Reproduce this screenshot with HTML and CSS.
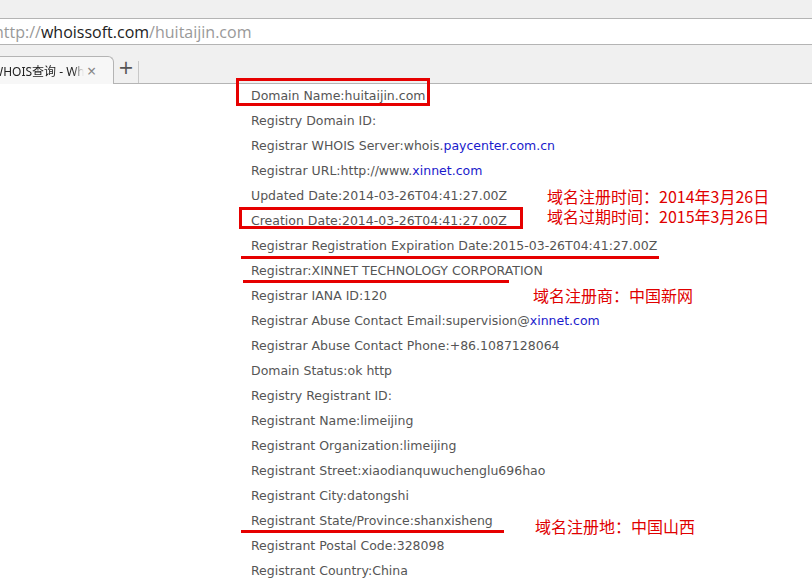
FILE: index.html
```html
<!DOCTYPE html>
<html lang="zh-CN">
<head>
<meta charset="utf-8">
<title>WHOIS查询 - Whoissoft</title>
<link rel="stylesheet" href="styles.css">
</head>
<body>
<div class="chrome">
  <div class="titlebar"></div>
  <div class="addressbar">
    <span class="url"><span class="dim">http://</span><span class="host">whoissoft.com</span><span class="dim">/huitaijin.com</span></span>
  </div>
  <div class="tabstrip">
    <div class="tab">
      <span class="tab-title">WHOIS查询 - Whoissoft</span>
      <span class="tab-close">×</span>
    </div>
    <div class="newtab">+</div>
    <div class="tab-sep"></div>
  </div>
</div>
<main class="page">
  <ul class="whois">
    <li>Domain Name:huitaijin.com</li>
    <li>Registry Domain ID:</li>
    <li>Registrar WHOIS Server:whois.<a class="lnk">paycenter.com.cn</a></li>
    <li>Registrar URL:http://www.<a class="lnk">xinnet.com</a></li>
    <li>Updated Date:2014-03-26T04:41:27.00Z</li>
    <li>Creation Date:2014-03-26T04:41:27.00Z</li>
    <li>Registrar Registration Expiration Date:2015-03-26T04:41:27.00Z</li>
    <li>Registrar:XINNET TECHNOLOGY CORPORATION</li>
    <li>Registrar IANA ID:120</li>
    <li>Registrar Abuse Contact Email:supervision@<a class="lnk">xinnet.com</a></li>
    <li>Registrar Abuse Contact Phone:+86.1087128064</li>
    <li>Domain Status:ok http</li>
    <li>Registry Registrant ID:</li>
    <li>Registrant Name:limeijing</li>
    <li>Registrant Organization:limeijing</li>
    <li>Registrant Street:xiaodianquwuchenglu696hao</li>
    <li>Registrant City:datongshi</li>
    <li>Registrant State/Province:shanxisheng</li>
    <li>Registrant Postal Code:328098</li>
    <li>Registrant Country:China</li>
  </ul>
  <div class="mark box box-name"></div>
  <div class="mark box box-created"></div>
  <div class="mark rule rule-expire"></div>
  <div class="mark rule rule-registrar"></div>
  <div class="mark rule rule-state"></div>
  <div class="note note-dates">域名注册时间：2014年3月26日<br>域名过期时间：2015年3月26日</div>
  <div class="note note-registrar">域名注册商：中国新网</div>
  <div class="note note-state">域名注册地：中国山西</div>
</main>
</body>
</html>
```
FILE: styles.css
```css
* { box-sizing: border-box; }
html, body { margin: 0; padding: 0; background: #fff; overflow: hidden; }
body { width: 812px; height: 581px; }

.chrome { font-family: "Open Sans", "Noto Sans CJK SC", sans-serif; }
.titlebar { height: 19px; background: #f0f0f0; border-bottom: 1px solid #b4b4b4; }
.addressbar {
  height: 26px; background: #fff; border-bottom: 1px solid #b4b4b4;
  display: flex; align-items: center; overflow: hidden;
}
.url { font-size: 16px; color: #999; margin-left: -6px; white-space: nowrap; padding-top: 1px; }
.url .host { color: #222; }

.tabstrip {
  height: 39px; background: #f0f0f0; border-bottom: 1px solid #b4b4b4;
  display: flex; align-items: flex-end;
}
.tab {
  width: 116px; height: 28px; margin-bottom: -1px; margin-left: -2px;
  background: #f7f7f7; border: 1px solid #b4b4b4; border-bottom: none;
  border-top-right-radius: 6px;
  display: flex; align-items: center; overflow: hidden;
  font-family: "Noto Sans", "Noto Sans CJK SC", sans-serif;
}
.tab-title {
  display: block; width: 92px; overflow: hidden; flex: none;
  font-size: 12px; color: #222; white-space: nowrap; margin-left: -7px;
  -webkit-mask-image: linear-gradient(to right, #000 88%, transparent);
  mask-image: linear-gradient(to right, #000 88%, transparent);
}
.tab-close { margin-left: 3px; font-size: 16px; color: #888; line-height: 16px; }
.newtab { width: 24px; height: 28px; font-size: 19px; color: #555; text-align: center; line-height: 24px; font-family: "DejaVu Sans", sans-serif; }
.tab-sep { width: 1px; height: 22px; background: #c8c8c8; }

.page { position: relative; height: 497px; }
.whois {
  list-style: none; margin: 0; padding: 0 0 0 251px;
  font-family: "DejaVu Sans", Verdana, sans-serif; font-size: 12.5px; color: #555;
  line-height: 25px; position: relative; top: -1px;
}
.whois li { white-space: nowrap; width: max-content; }
.lnk { color: #1a1acc; text-decoration: none; }

.mark { position: absolute; }
.box { border: 3px solid #e60000; }
.box-name { left: 236px; top: -6px; width: 194px; height: 28px; }
.box-created { left: 239px; top: 123px; width: 284px; height: 22px; }
.rule { height: 3px; background: #e60000; }
.rule-expire { left: 241px; top: 172px; width: 418px; }
.rule-registrar { left: 243px; top: 196px; width: 266px; }
.rule-state { left: 241px; top: 446px; width: 263px; }

.note {
  position: absolute; color: #e00000; white-space: nowrap;
  font-family: "Noto Sans CJK SC", sans-serif; font-size: 16px; line-height: 20px;
}
.note-dates { left: 547px; top: 102px; }
.note-registrar { left: 533px; top: 201px; }
.note-state { left: 535px; top: 432px; }
```
